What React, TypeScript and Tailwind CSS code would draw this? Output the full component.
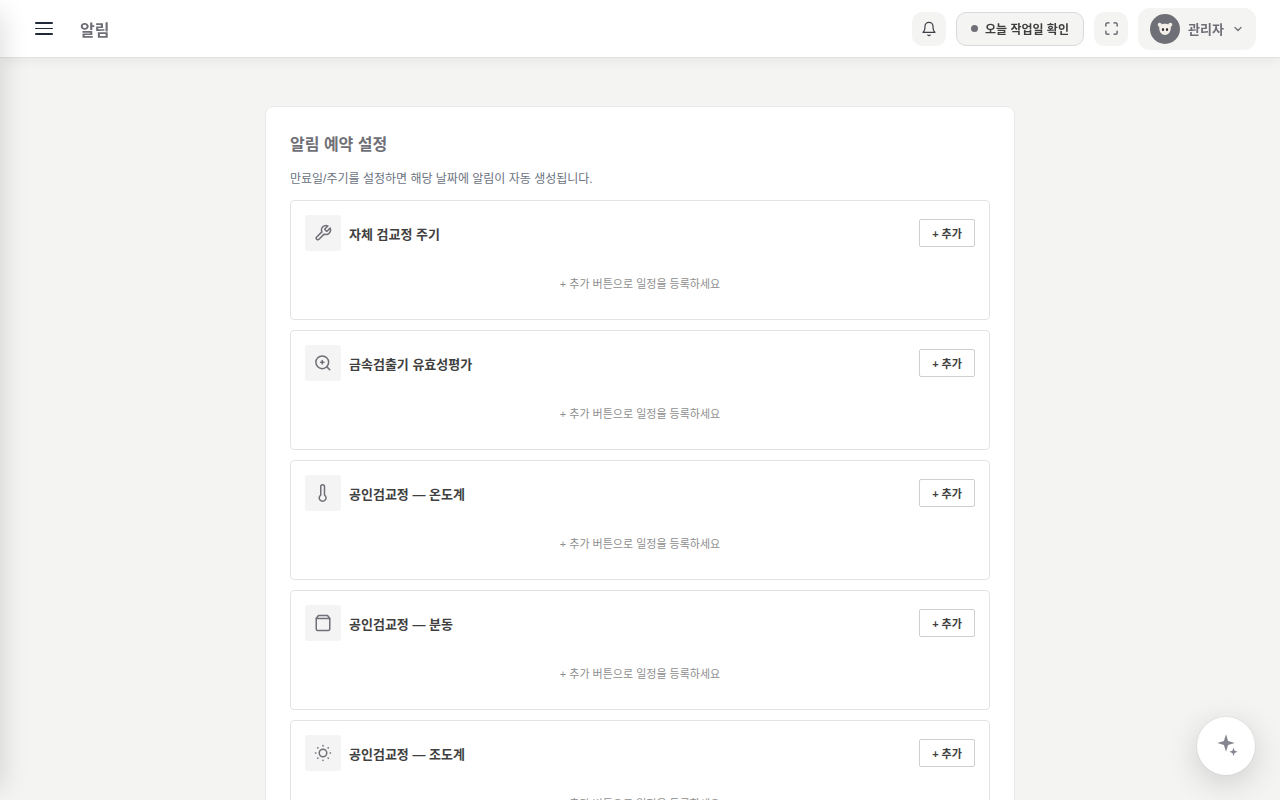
import React from 'react';

const base = {
  fill: 'none',
  stroke: 'currentColor',
  strokeWidth: 2,
  strokeLinecap: 'round' as const,
  strokeLinejoin: 'round' as const,
  viewBox: '0 0 24 24',
};

const icons: Record<string, React.ReactNode> = {
  wrench: (
    <path d="M14.7 6.3a1 1 0 0 0 0 1.4l1.6 1.6a1 1 0 0 0 1.4 0l3.77-3.77a6 6 0 0 1-7.94 7.94l-6.91 6.91a2.12 2.12 0 0 1-3-3l6.91-6.91a6 6 0 0 1 7.94-7.94l-3.76 3.76z" />
  ),
  zoom: (
    <>
      <circle cx="11" cy="11" r="8.500" />
      <path d="m21 21-3.800-3.800M11 8.700v4.600M8.700 11h4.600" />
    </>
  ),
  thermometer: <path d="M14 14.76V3.5a2.5 2.5 0 0 0-5 0v11.26a4.5 4.5 0 1 0 5 0z" />,
  weight: (
    <>
      <path d="M6 2 3 6v14a2 2 0 0 0 2 2h14a2 2 0 0 0 2-2V6l-3-4z" />
      <path d="M3 6h18" />
    </>
  ),
  sun: (
    <>
      <circle cx="12" cy="12" r="5" />
      <path d="M12 2v.5M12 21.500v.5M4.900 4.900l.3.3M18.800 18.800l.3.3M2 12h.5M21.500 12h.5M4.900 19.100l.3-.3M18.800 5.200l.3-.3" />
    </>
  ),
};

const schedules = [
  { icon: 'wrench', title: '자체 검교정 주기' },
  { icon: 'zoom', title: '금속검출기 유효성평가' },
  { icon: 'thermometer', title: '공인검교정 — 온도계' },
  { icon: 'weight', title: '공인검교정 — 분동' },
  { icon: 'sun', title: '공인검교정 — 조도계' },
];

function Header() {
  return (
    <header className="relative z-10 flex h-[58px] shrink-0 items-center border-b border-[#e0e2e4] bg-white pr-6 pl-[35px] shadow-[0_2px_12px_rgba(0,0,0,0.06)] will-change-transform">
      <button className="flex w-[18px] flex-col" aria-label="메뉴">
        <span className="h-[2px] rounded-full bg-[#1f2937]" />
        <span className="mt-[4px] h-px rounded-full bg-[#1f2937]" />
        <span className="mt-[4px] h-[2px] rounded-full bg-[#1f2937]" />
      </button>
      <h1 className="ml-[27px] pt-[4px] text-[16px] font-bold text-[#6f6f77]">알림</h1>
      <div className="ml-auto flex items-center gap-[10px]">
        <button className="flex size-[34px] items-center justify-center rounded-[10px] bg-[#f4f4f3] text-[#3f3f46]" aria-label="알림">
          <svg {...base} strokeWidth={1.8} width="16" height="16">
            <path d="M18 8A6 6 0 0 0 6 8c0 7-3 9-3 9h18s-3-2-3-9M13.73 21a2 2 0 0 1-3.46 0" />
          </svg>
        </button>
        <button className="flex h-[34px] w-[128px] items-center gap-[7px] rounded-[10px] border border-[#d9d9db] bg-[#f4f4f3] pl-[14px] text-[12px] font-bold whitespace-nowrap text-[#3f3f3f]">
          <span className="size-[7px] rounded-full bg-[#6f6f77]" />
          <span className="pt-[2px]">오늘 작업일 확인</span>
        </button>
        <button className="flex size-[34px] items-center justify-center rounded-[10px] bg-[#f4f4f3] text-[#52525b]" aria-label="전체 화면">
          <svg {...base} width="15" height="15">
            <path d="M8 3H5a2 2 0 0 0-2 2v3M21 8V5a2 2 0 0 0-2-2h-3M3 16v3a2 2 0 0 0 2 2h3M16 21h3a2 2 0 0 0 2-2v-3" />
          </svg>
        </button>
        <button className="flex h-[42px] w-[118px] items-center rounded-[12px] bg-[#f4f4f3] pl-3 text-[#6f6f77]">
          <svg width="30" height="30" viewBox="0 0 30 30">
            <circle cx="15" cy="15" r="15" fill="#6f6f77" />
            <g fill="#f3efe8">
              <circle cx="9.700" cy="10.800" r="2" />
              <circle cx="20.300" cy="10.800" r="2" />
              <path d="M9.2 13.500c0-2.600 2.500-3.700 5.800-3.700s5.800 1.100 5.800 3.700c0 4.700-2.500 7.500-5.800 7.500s-5.800-2.800-5.800-7.500z" />
            </g>
            <ellipse cx="13" cy="15.500" rx="1.100" ry="1.500" fill="#2b2b30" />
            <ellipse cx="17" cy="15.500" rx="1.100" ry="1.500" fill="#2b2b30" />
          </svg>
          <span className="ml-2 pt-[2px] text-[13px] font-bold">관리자</span>
          <svg {...base} strokeWidth={2.5} width="12" height="12" className="ml-2">
            <path d="m6 9 6 6 6-6" />
          </svg>
        </button>
      </div>
    </header>
  );
}

function ScheduleCard({ icon, title }: { icon: string; title: string }) {
  return (
    <section className="h-[120px] shrink-0 rounded-[4px] border border-[#e2e3e5] p-[14px]">
      <div className="flex h-9 items-center">
        <div className="flex size-9 items-center justify-center rounded-[3px] bg-[#f4f4f4] text-[#6f6f77]">
          <svg {...base} width="18" height="18">
            {icons[icon]}
          </svg>
        </div>
        <h3 className="ml-2 pt-[4px] text-[13px] font-bold text-[#3f3f3f]">{title}</h3>
        <button className="ml-auto h-7 w-14 rounded-[2px] border border-[#cfcfcf] bg-white pt-[2px] text-[11px] font-bold text-[#3f3f3f]">
          + 추가
        </button>
      </div>
      <p className="mt-6 text-center text-[11px] leading-[18px] text-[#8e8e8e]">+ 추가 버튼으로 일정을 등록하세요</p>
    </section>
  );
}

export default function App() {
  return (
    <div className="relative flex h-screen flex-col overflow-hidden bg-[#f4f4f3] font-['Liberation_Sans','Noto_Sans_CJK_KR',sans-serif]">
      <Header />
      <main className="flex min-h-0 flex-1 flex-col items-center overflow-hidden pt-12">
        <div className="flex w-[750px] shrink-0 flex-col rounded-[8px] border border-[#e8e9ea] bg-white p-6">
          <h2 className="mt-[2px] text-[16px] leading-6 font-bold text-[#6f6f77]">알림 예약 설정</h2>
          <p className="mt-[13px] text-[12px] leading-[18px] text-[#6b7280]">만료일/주기를 설정하면 해당 날짜에 알림이 자동 생성됩니다.</p>
          <div className="mt-[12px] flex flex-col gap-[10px]">
            {schedules.map((s) => (
              <ScheduleCard key={s.title} {...s} />
            ))}
          </div>
        </div>
      </main>
      <aside className="absolute inset-y-3 -left-[240px] z-20 w-[240px] bg-white shadow-[4px_0_24px_rgba(0,0,0,0.12)]" />
      <button
        className="absolute right-[25px] bottom-[25px] z-20 flex size-[58px] items-center justify-center rounded-full bg-white text-[#85858f] shadow-[0_0_0_1px_rgba(0,0,0,0.03),0_8px_32px_rgba(0,0,0,0.16)]"
        aria-label="도우미"
      >
        <svg width="24" height="24" viewBox="0 0 24 24" fill="currentColor">
          <path d="M12 .3l2.100 6.600 6.600 2.100-6.600 2.100-2.100 6.600-2.100-6.600-6.600-2.100 6.600-2.100z" />
          <path d="M19.500 13.700l1.100 3 3 1.100-3 1.100-1.100 3-1.100-3-3-1.100 3-1.100z" />
        </svg>
      </button>
    </div>
  );
}
